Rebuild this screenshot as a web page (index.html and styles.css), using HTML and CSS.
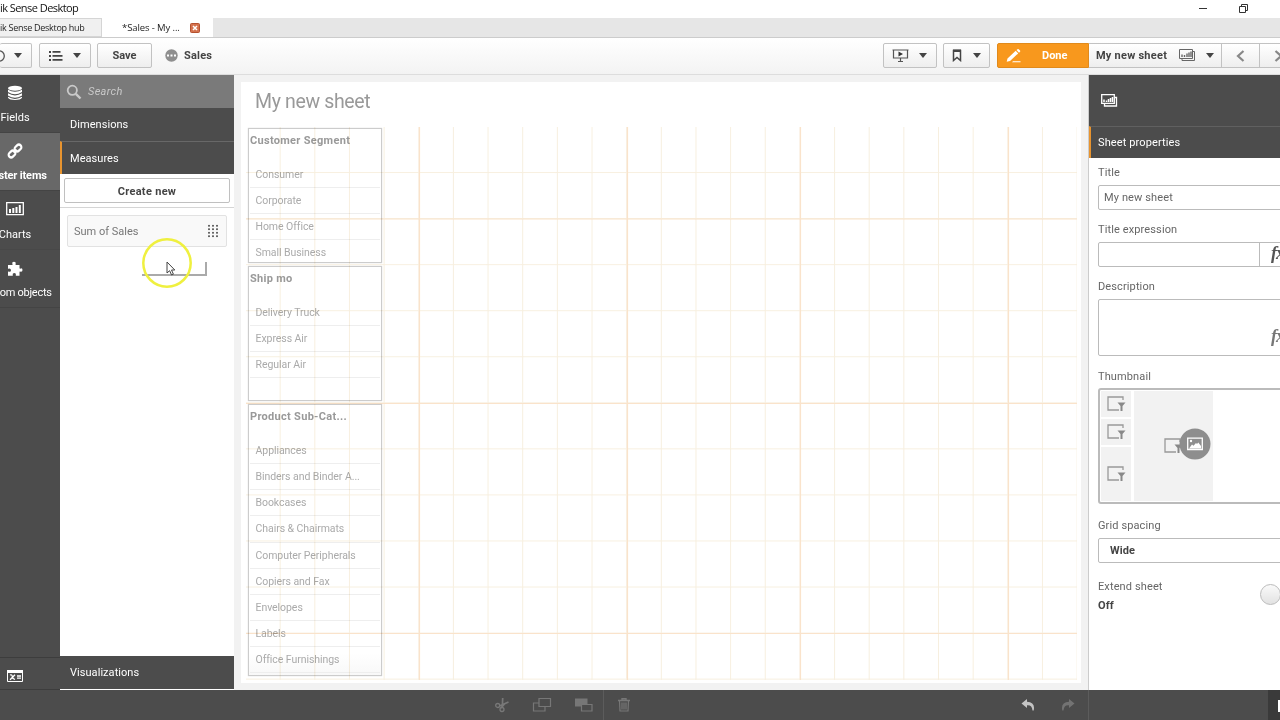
FILE: index.html
```html
<!DOCTYPE html>
<html lang="en">
<head>
  <meta charset="UTF-8">
  <title>Qlik Sense Desktop</title>
  <link rel="stylesheet" href="styles.css">
</head>
<body>
  <!-- Window title bar -->
  <header class="titlebar">
    <span class="window-title">ik Sense Desktop</span>
    <svg class="window-buttons" width="50" height="14" viewBox="0 0 50 14" fill="none" stroke="#333">
      <path d="M1 7.500h8M41.500 5.500h6v6h-6zM43.500 5.500v-2h6v6h-2"/>
    </svg>
  </header>

  <!-- Tabs -->
  <nav class="tabs">
    <div class="tab tab-hub">ik Sense Desktop hub</div>
    <div class="tab tab-active">
      <span>*Sales - My ...</span>
      <svg width="10" height="10" viewBox="0 0 10 10"><rect x=".5" y=".5" width="9" height="9" rx="1" fill="#d4724e" stroke="#b5512f"/><path d="M3 3l4 4M7 3l-4 4" stroke="#fff" stroke-width="1.500"/></svg>
    </div>
  </nav>

  <!-- Toolbar -->
  <div class="toolbar">
    <div class="tools">
      <button class="btn btn-nav">
        <svg width="10" height="14" viewBox="0 0 10 14"><circle cx="-1" cy="7" r="5.300" fill="none" stroke="#555" stroke-width="1.300"/></svg>
        <i class="caret"></i>
      </button>
      <button class="btn btn-menu">
        <svg width="15" height="12" viewBox="0 0 15 12" fill="#444"><path d="M1 1h2v2H1zM1 5h2v2H1zM1 9h2v2H1zM4.500 1h8v1.700h-8zM4.500 5h10v1.700h-10zM4.500 9h10v1.700h-10z"/></svg>
        <i class="caret"></i>
      </button>
      <button class="btn btn-save">Save</button>
      <svg class="app-icon" width="13" height="13" viewBox="0 0 13 13"><circle cx="6.500" cy="6.500" r="6.200" fill="#8f8f8f"/><path d="M2 5.600h2v2H2zM5.500 5.600h2v2h-2zM9 5.600h2v2H9z" fill="#fff"/></svg>
      <span class="app-name">Sales</span>
    </div>
    <div class="tools">
      <button class="btn btn-story">
        <svg width="17" height="15" viewBox="0 0 17 15" fill="none" stroke="#555"><path d="M.5 2h16M1.500 2v8h14V2M8.500 10v4M6 13.500h5" stroke-width="1.200"/><path d="M6.500 3.500v5L11 6z" fill="#333" stroke="none"/></svg>
        <i class="caret"></i>
      </button>
      <button class="btn btn-bookmark">
        <svg width="10" height="13" viewBox="0 0 10 13"><path d="M1.500 1.500h7v10L5 8.500l-3.500 3z" fill="none" stroke="#444" stroke-width="1.500"/><path d="M1 .5h8v2.500H1z" fill="#444"/></svg>
        <i class="caret"></i>
      </button>
      <button class="btn-done">
        <svg width="15" height="14" viewBox="0 0 15 14" fill="#fff"><path d="M1.500 9.500L9.700 1.800l2.500 2.600L4 12l-3.300.8zM10.500 1.100l1-.9q.6-.4 1.200.1l1.300 1.300q.5.600 0 1.200l-1 .9zM7 12.300h7.500v1H6z"/></svg>
        <span>Done</span>
      </button>
      <button class="btn-sheet">
        <span>My new sheet</span>
        <svg width="17" height="13" viewBox="0 0 17 13" fill="none" stroke="#666"><path d="M.5.5h13v9H.5zM14 2.500h1.500v9H3V10"/><path d="M3 8V5.500M5.500 8V6M8 8V4.500M10 8V3.500M12 8V2.500" stroke-width="1.400"/></svg>
        <i class="caret"></i>
      </button>
      <button class="btn-step"><svg width="9" height="12" viewBox="0 0 9 12"><path d="M7.500 1L2 6l5.500 5" fill="none" stroke="#888" stroke-width="2.200"/></svg></button>
      <button class="btn-step"><svg width="9" height="12" viewBox="0 0 9 12"><path d="M1.500 1L7 6l-5.500 5" fill="none" stroke="#888" stroke-width="2.200"/></svg></button>
    </div>
  </div>

  <main class="workspace">
    <!-- Asset panel tabs -->
    <aside class="asset-nav">
      <div class="asset">
        <svg width="16" height="16" viewBox="0 0 16 16" fill="#fff"><ellipse cx="8" cy="3.300" rx="7" ry="2.500"/><path d="M1 4.700q7 4 14 0v2.300q-7 4.500-14 0zM1 8.300q7 4.200 14 0v2.200q-7 4.500-14 0zM1 11.800q7 4.200 14 0v1q-1.500 2.200-7 2.200t-7-2.200z"/></svg>
        <span>Fields</span>
      </div>
      <div class="asset asset-selected">
        <svg width="16" height="16" viewBox="0 0 16 16" fill="none" stroke="#fff" stroke-width="2.200"><rect x="-3.700" y="-2.500" width="7.400" height="5" rx="2.500" transform="translate(11 5) rotate(-45)"/><rect x="-3.700" y="-2.500" width="7.400" height="5" rx="2.500" transform="translate(5 11) rotate(-45)"/><path d="M6.500 9.500l3-3"/></svg>
        <span>Master items</span>
      </div>
      <div class="asset asset-low">
        <svg width="18" height="14" viewBox="0 0 18 14"><path d="M.7.7h16.600v12H.7z" fill="none" stroke="#fff" stroke-width="1.300"/><path d="M3 7h2v4H3zM6.300 6h2v5h-2zM9.500 5h2v6h-2zM12.800 3h2v8h-2z" fill="#fff"/></svg>
        <span>Charts</span>
      </div>
      <div class="asset asset-low">
        <svg width="16" height="16" viewBox="0 0 16 16" fill="#fff"><path d="M1 4h4.300q.5-.3.100-1.100Q4.800.8 7 .8t1.700 2.100q-.4.800.1 1.100h3.700v3.300q.4.600 1.200.1Q15.500 7 15.500 9t-1.800 1.700q-.8-.4-1.200.1v4H9q-.5-.4-.1-1.200.3-1.600-1.600-1.600T5.700 13.600q.4.800-.1 1.200H1v-4q.4-.5 1.100-.1Q4 11 4 9.200T2.100 7.500Q1.400 8 1 7.500z"/></svg>
        <span class="asset-tight">Custom objects</span>
      </div>
      <div class="asset-variables">
        <svg width="16" height="12" viewBox="0 0 16 12"><path d="M.5.5h15v11H.5z" fill="none" stroke="#fff"/><path d="M0 0h16v3H0z" fill="#fff"/><path d="M3 5q2-.8 2.300 1.500T8 9.500M8 4.700L3 9.700M10 6h4M10 8.200h4" fill="none" stroke="#fff" stroke-width="1.300"/></svg>
      </div>
    </aside>

    <!-- Master items -->
    <section class="library">
      <div class="search">
        <svg width="16" height="16" viewBox="0 0 16 16" fill="none" stroke="#c9c9c9"><circle cx="6.300" cy="6.300" r="4.600" stroke-width="1.800"/><path d="M9.800 9.800l4.700 4.700" stroke-width="2.400"/></svg>
        <span>Search</span>
      </div>
      <div class="section-head">Dimensions</div>
      <div class="section-head section-open">Measures</div>
      <div class="library-body">
        <div class="create-row"><button class="create">Create new</button></div>
        <div class="measure">
          <span>Sum of Sales</span>
          <i class="drag-handle"></i>
        </div>
        <div class="drag-ghost"></div>
        <svg class="pointer" width="52" height="52" viewBox="0 0 52 52"><circle cx="26" cy="26" r="23.700" fill="none" stroke="#eff03f" stroke-width="2.500"/><path d="M26 25v11l2.600-2.300 2 4.300 1.800-.8-1.900-4.200h3.300z" fill="#fff" stroke="#444"/></svg>
      </div>
      <div class="section-head section-last">Visualizations</div>
    </section>

    <!-- Sheet canvas -->
    <section class="canvas">
      <div class="sheet">
        <h1>My new sheet</h1>
        <div class="objects">
          <div class="filter">
            <h2>Customer Segment</h2>
            <ul><li>Consumer</li><li>Corporate</li><li>Home Office</li><li>Small Business</li></ul>
          </div>
          <div class="filter">
            <h2>Ship mo</h2>
            <ul><li>Delivery Truck</li><li>Express Air</li><li>Regular Air</li></ul>
          </div>
          <div class="filter filter-tall">
            <h2>Product Sub-Cat...</h2>
            <ul><li>Appliances</li><li>Binders and Binder A...</li><li>Bookcases</li><li>Chairs &amp; Chairmats</li><li>Computer Peripherals</li><li>Copiers and Fax</li><li>Envelopes</li><li>Labels</li><li>Office Furnishings</li></ul>
          </div>
        </div>
        <svg class="grid" width="832" height="553" viewBox="0 0 832 553">
          <defs>
            <pattern id="cell" width="34.650" height="46.050" patternUnits="userSpaceOnUse"><path d="M34.150 0v46.050M0 45.550h34.650" fill="none" stroke="#f7efdf"/></pattern>
          </defs>
          <path d="M0 0h831v553H0z" fill="url(#cell)"/>
          <path d="M173.500 0v553M381.500 0v553M554.500 0v553M762.500 0v553M0 92h831M0 276.500h831M0 506.500h831" stroke="#fae3cb" stroke-width="1.200"/>
        </svg>
      </div>
    </section>

    <!-- Sheet properties -->
    <aside class="properties">
      <div class="prop-top">
        <svg width="17" height="13" viewBox="0 0 17 13" fill="none" stroke="#fff"><path d="M.7.7h12.600v8.600H.7zM14 3.500h1.500v8.500H3.500V10" stroke-width="1.300"/><path d="M3 8V5.500M5.500 8V6.500M7.500 8V5M9.500 8V4M11.500 8V3" stroke-width="1.500"/></svg>
      </div>
      <div class="prop-head">Sheet properties</div>
      <div class="prop-body">
        <label>Title</label>
        <div class="field">My new sheet</div>
        <label>Title expression</label>
        <div class="field field-expr"><span class="fx">fx</span></div>
        <label>Description</label>
        <div class="field field-area"><span class="fx">fx</span></div>
        <label>Thumbnail</label>
        <div class="thumb">
          <svg width="0" height="0" class="defs">
            <symbol id="filter-icon" viewBox="0 0 19 16"><path d="M16 4V1H1v13h11" fill="none" stroke="#999" stroke-width="1.300"/><path d="M10.500 6.500h8l-3 3.500v5h-2v-5z" fill="#888"/></symbol>
          </svg>
          <div class="thumb-col">
            <div class="thumb-cell"><svg width="19" height="16"><use href="#filter-icon"/></svg></div>
            <div class="thumb-cell"><svg width="19" height="16"><use href="#filter-icon"/></svg></div>
            <div class="thumb-cell thumb-cell-tall"><svg width="19" height="16"><use href="#filter-icon"/></svg></div>
          </div>
          <div class="thumb-main"><svg width="19" height="16"><use href="#filter-icon"/></svg></div>
          <svg class="thumb-badge" width="32" height="32" viewBox="0 0 32 32"><circle cx="16" cy="16" r="15.500" fill="#8e8e8e"/><path d="M8.700 10.200h14.600v11.300H8.700z" fill="none" stroke="#fff" stroke-width="1.300"/><path d="M10 20.500l3-4 1.500 1.200 2.500-2.700 1 1 1.300-1.500 2.700 3.500v2.500z" fill="#fff"/><circle cx="12" cy="13" r="1.200" fill="#fff"/></svg>
        </div>
        <label>Grid spacing</label>
        <div class="field field-select">Wide</div>
        <div class="extend">
          <div><label>Extend sheet</label><strong>Off</strong></div>
          <i class="knob"></i>
        </div>
      </div>
    </aside>
  </main>

  <!-- Edit bar -->
  <footer class="editbar">
    <div class="edit-tools">
      <svg width="16" height="16" viewBox="0 0 16 16" fill="none" stroke="#787878" stroke-width="1.300"><circle cx="3.700" cy="8.500" r="2"/><circle cx="8" cy="12.500" r="2"/><path d="M5.500 9l9-4M8.300 10.500L8.700 1M7 11l3.500-4" stroke-width="1.700"/></svg>
      <svg width="20" height="16" viewBox="0 0 20 16" fill="none" stroke="#777" stroke-width="1.200"><path d="M7 1.500h11.500v8H7zM7 6H1.500v8h11.500V9.500"/></svg>
      <svg width="20" height="16" viewBox="0 0 20 16"><path d="M1 1.500h12.500v8H1z" fill="#777"/><path d="M7.500 7.500H18v6.500H7.500z" fill="#4c4c4c" stroke="#777" stroke-width="1.200"/></svg>
    </div>
    <div class="edit-delete">
      <svg width="12" height="14" viewBox="0 0 12 14" fill="none" stroke="#777"><path d="M0 2.500h12M4 2V.8h4V2" stroke-width="1.400"/><path d="M1.500 3l.5 10h8l.5-10M4 4.500v7M6 4.500v7M8 4.500v7" stroke-width="1.200"/></svg>
    </div>
    <div class="edit-history">
      <svg width="14" height="12" viewBox="0 0 14 12" fill="#c4c4c4"><path d="M6 0L.5 4.500 6 9V6.200q5-.7 5.500 5.300h1.200Q14.500 3 6 2.700z"/></svg>
      <svg width="14" height="12" viewBox="0 0 14 12" fill="#737373"><path d="M8 0l5.500 4.500L8 9V6.200q-5-.7-5.500 5.300H1.300Q-.5 3 8 2.700z"/></svg>
    </div>
    <div class="edit-space"></div>
    <div class="edit-panel"><i></i></div>
  </footer>
</body>
</html>
```
FILE: styles.css
```css
* {
  margin: 0;
  padding: 0;
  box-sizing: border-box;
}

body {
  width: 1280px;
  height: 720px;
  overflow: hidden;
  display: flex;
  flex-direction: column;
  font-family: Roboto, "Liberation Sans", sans-serif;
  font-size: 11px;
  color: #444;
  background: #fff;
}

svg {
  display: block;
  flex: none;
}

button {
  font: inherit;
  color: inherit;
}

/* Title bar and tabs */
.titlebar {
  flex: 0 0 18px;
  display: flex;
  justify-content: space-between;
  align-items: center;
  padding-right: 32px;
  padding-bottom: 3px;
}

.window-title {
  font-family: "Open Sans", sans-serif;
  font-size: 11px;
  line-height: 14px;
  letter-spacing: -0.55px;
  color: #111;
}

.tabs {
  flex: 0 0 20px;
  display: flex;
  background: #e6e6e6;
  border-bottom: 1px solid #ccc;
}

.tab {
  font-family: "Open Sans", sans-serif;
  font-size: 9.5px;
  line-height: 14px;
  color: #222;
  display: flex;
  align-items: center;
  height: 19px;
}

.tab-hub {
  width: 102px;
  padding-top: 1px;
  background: #f0f0f0;
  border: 1px solid #d5d5d5;
  border-left: 0;
  font-size: 9px;
  letter-spacing: -0.28px;
}

.tab-active {
  width: 111px;
  padding-left: 20px;
  gap: 10px;
  background: #fff;
  letter-spacing: -0.1px;
}

/* Toolbar */
.toolbar {
  flex: 0 0 37px;
  display: flex;
  justify-content: space-between;
  align-items: center;
  width: 1298px;
  padding-bottom: 1px;
  background: linear-gradient(#fff, #f3f3f3);
  border-bottom: 1px solid #ddd;
  font-weight: 700;
  letter-spacing: 0.2px;
}

.tools {
  display: flex;
  align-items: center;
}

.btn,
.btn-done,
.btn-sheet,
.btn-step {
  height: 25px;
  display: flex;
  align-items: center;
  justify-content: center;
  border: 1px solid #c2c2c2;
  border-radius: 2px;
  background: linear-gradient(#fff, #eee);
}

.caret {
  border: 4px solid transparent;
  border-top: 5px solid #444;
  border-bottom: 0;
}

.btn-nav {
  width: 32px;
  justify-content: flex-start;
  gap: 4px;
  border-left: 0;
  margin-right: 7px;
}

.btn-menu {
  width: 52px;
  gap: 10px;
  padding-right: 1px;
  margin-right: 6px;
}

.btn-save {
  width: 55px;
  margin-right: 13px;
}

.app-name {
  margin-left: 6px;
}

.btn-story {
  width: 54px;
  gap: 10px;
  padding-right: 2px;
  margin-right: 6px;
}

.btn-bookmark {
  width: 47px;
  gap: 11px;
  padding-right: 1px;
  margin-right: 7px;
}

.btn-done {
  width: 92px;
  justify-content: flex-start;
  padding-left: 8px;
  gap: 21px;
  color: #fff;
  background: #f8981d;
  border-color: #e08a1c;
  border-radius: 2px 0 0 2px;
}

.btn-sheet {
  width: 133px;
  gap: 12px;
  border-left: 0;
  border-radius: 0;
  letter-spacing: 0.25px;
}

.btn-sheet .caret {
  margin-left: -2px;
}

.btn-step {
  width: 38px;
  border-left: 0;
  border-radius: 0;
}

/* Workspace columns */
.workspace {
  flex: 0 0 615px;
  display: grid;
  grid-template-columns: 60px 174px 854px 240px;
}

.asset-nav {
  display: flex;
  flex-direction: column;
  background: #4c4c4c;
  color: #fff;
}

.asset {
  width: 90px;
  height: 58px;
  margin-left: -30px;
  display: flex;
  flex-direction: column;
  align-items: center;
  justify-content: space-between;
  padding: 10px 0 8px;
  white-space: nowrap;
  border-bottom: 1px solid #444;
  clip-path: inset(0 0 0 30px);
}

.asset-selected {
  background: #686868;
  font-weight: 700;
  letter-spacing: -0.15px;
}

.asset-low {
  height: 58.5px;
  padding-top: 11px;
}

.asset-tight {
  letter-spacing: -0.25px;
}

.asset-variables {
  height: 33px;
  margin-top: auto;
  padding: 12px 7px;
  border-top: 1px solid #3d3d3d;
  border-bottom: 1px solid #3d3d3d;
}

/* Library */
.library {
  display: flex;
  flex-direction: column;
  position: relative;
  border-bottom: 1px solid #fff;
}

.search {
  height: 33px;
  display: flex;
  align-items: center;
  gap: 6px;
  padding-left: 6px;
  background: #7a7a7a;
  color: #c9c9c9;
  font-style: italic;
  letter-spacing: 0.3px;
}

.section-head {
  height: 33px;
  line-height: 34px;
  padding-left: 10px;
  background: #4c4c4c;
  color: #fff;
  letter-spacing: 0.05px;
}

.section-open {
  border-top: 1px solid #686868;
  border-left: 2px solid #e8942f;
  padding-left: 8px;
}

.section-last {
  line-height: 33px;
}

.library-body {
  flex: 1;
}

.create-row {
  height: 34px;
  padding: 4px;
  border-bottom: 1px solid #d5d5d5;
}

.create {
  width: 166px;
  height: 25px;
  padding-top: 1px;
  background: #fff;
  border: 1px solid #c0c0c0;
  border-radius: 2px;
  font-weight: 700;
  letter-spacing: 0.3px;
}

.measure {
  width: 160px;
  height: 32px;
  margin: 7px 0 0 7px;
  padding: 0 7px 0 6px;
  display: flex;
  align-items: center;
  justify-content: space-between;
  background: #f9f9f9;
  border: 1px solid #e2e2e2;
  border-radius: 2px;
  color: #777;
}

.drag-handle {
  width: 12px;
  height: 14px;
  background: radial-gradient(circle, #666 0.8px, transparent 1.2px) 0 0 / 4px 3.5px;
}

.drag-ghost {
  position: absolute;
  left: 82px;
  top: 187px;
  width: 65px;
  height: 14px;
  border-right: 2px solid #aaa;
  border-bottom: 2px solid #aaa;
}

.pointer {
  position: absolute;
  left: 81px;
  top: 162px;
}

/* Canvas */
.canvas {
  background: #f2f2f2;
  padding: 7px;
}

.sheet {
  position: relative;
  height: 601px;
  background: #fff;
}

.sheet h1 {
  height: 46px;
  padding: 8px 0 0 14px;
  font-size: 19.5px;
  line-height: 24px;
  font-weight: 400;
  letter-spacing: -0.35px;
  color: #999;
}

.objects {
  display: flex;
  flex-direction: column;
  gap: 3px;
  width: 134px;
  margin-left: 7px;
}

.filter {
  height: 135px;
  padding: 0 1px;
  border: 1px solid #ccc;
  box-shadow: 0 0 1px #ccc;
  color: #aaa;
}

.filter-tall {
  height: 272px;
  background: linear-gradient(#fff 92%, #f8f8f8);
}

.filter h2 {
  height: 33px;
  line-height: 23px;
  font-size: 11px;
  letter-spacing: 0.3px;
  color: #999;
}

.filter ul {
  list-style: none;
}

.filter li {
  height: 26.15px;
  line-height: 26px;
  padding-left: 5.5px;
  font-size: 10.5px;
  letter-spacing: -0.06px;
  border-bottom: 1px solid #eee;
}

.grid {
  position: absolute;
  left: 5px;
  top: 45px;
  mix-blend-mode: multiply;
}

/* Properties */
.properties {
  border-left: 1px solid #ccc;
  letter-spacing: 0.12px;
}

.prop-top {
  height: 51px;
  padding: 19px 12px;
  background: #4c4c4c;
}

.prop-head {
  height: 32px;
  line-height: 31px;
  padding-left: 7px;
  border-top: 1px solid #606060;
  border-left: 2px solid #e8942f;
  background: #4c4c4c;
  color: #fff;
}

.prop-body {
  padding: 7px 0 0 9px;
  color: #666;
}

.prop-body label {
  display: block;
  height: 20px;
  line-height: 16px;
}

.field {
  height: 25px;
  margin-bottom: 12px;
  padding-left: 5px;
  line-height: 23px;
  border: 1px solid #bbb;
  border-radius: 2px;
}

.field-expr {
  padding-left: 160px;
  line-height: 21px;
}

.field-expr .fx {
  display: block;
  height: 23px;
  padding-left: 11px;
  border-left: 1px solid #bbb;
}

.fx {
  font: italic bold 18px/21px "Liberation Serif", serif;
  letter-spacing: -1px;
  color: #555;
}

.field-area {
  height: 57px;
  margin-bottom: 13px;
  padding: 26px 0 0 172px;
}

.field-area .fx {
  display: block;
  color: #777;
}

.thumb {
  position: relative;
  height: 116px;
  margin-top: -1px;
  margin-bottom: 14px;
  padding: 1px;
  display: flex;
  gap: 3px;
  border: 2px solid #bbb;
  border-radius: 3px;
}

.defs {
  position: absolute;
}

.thumb-col {
  width: 30px;
  display: flex;
  flex-direction: column;
  gap: 2px;
}

.thumb-cell,
.thumb-main {
  display: flex;
  align-items: center;
  justify-content: center;
  background: #f2f2f2;
}

.thumb-cell {
  height: 26px;
}

.thumb-cell-tall {
  flex: 1;
}

.thumb-main {
  width: 79px;
}

.thumb-badge {
  position: absolute;
  left: 79px;
  top: 38px;
}

.field-select {
  margin-bottom: 16px;
  padding-left: 11px;
  font-weight: 700;
  color: #444;
}

.extend {
  display: flex;
  width: 183px;
  justify-content: space-between;
}

.extend strong {
  display: block;
  color: #444;
  line-height: 14px;
}

.knob {
  width: 21px;
  height: 21px;
  margin-top: 5px;
  border: 1px solid #bbb;
  border-radius: 50%;
  background: linear-gradient(#fafafa, #e2e2e2);
}

/* Edit bar */
.editbar {
  flex: 0 0 30px;
  display: flex;
  background: #4c4c4c;
}

.edit-tools {
  width: 604px;
  display: flex;
  align-items: center;
  justify-content: flex-end;
  gap: 22px;
  padding-right: 9px;
  border-right: 1px solid #5c5c5c;
}

.edit-delete {
  display: flex;
  align-items: center;
  padding-left: 14px;
}

.edit-history {
  width: 459px;
  display: flex;
  align-items: center;
  justify-content: flex-end;
  gap: 26px;
  padding-right: 13px;
  border-right: 1px solid #5c5c5c;
}

.edit-space {
  flex: 1;
}

.edit-panel {
  width: 12px;
  padding: 10px 0 0 10px;
  background: #3a3a3a;
}

.edit-panel i {
  display: block;
  width: 2px;
  height: 12px;
  background: #fff;
}
```
